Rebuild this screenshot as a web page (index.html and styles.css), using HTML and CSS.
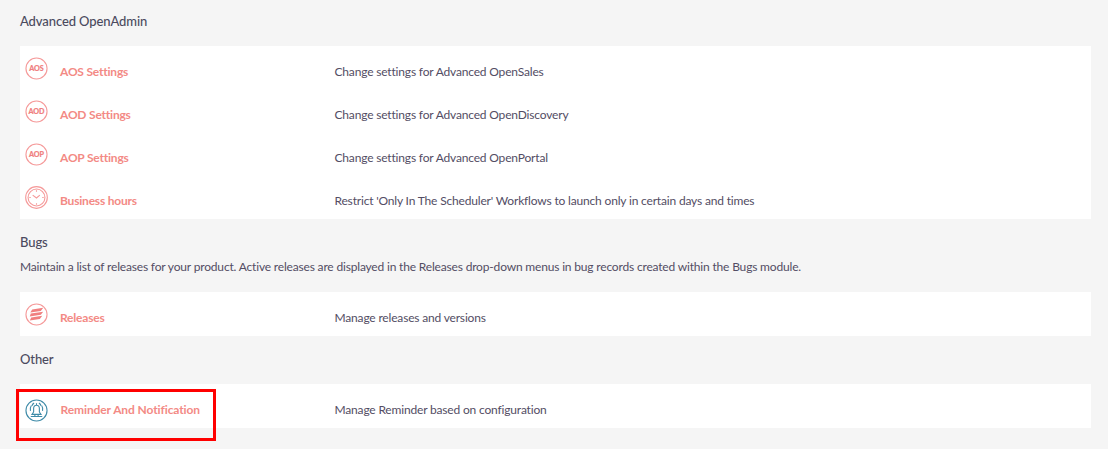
FILE: index.html
```html
<!DOCTYPE html>
<html lang="en">
<head>
  <meta charset="UTF-8" />
  <title>Admin</title>
  <link rel="stylesheet" href="styles.css">
</head>
<body>
  <div class="page">
    <h3 class="section-title first">Advanced OpenAdmin</h3>
    <div class="panel">
      <div class="row">
        <svg class="icon" viewBox="0 0 24 24"><circle cx="12" cy="12" r="11" /><text x="12" y="14.800" class="icon-text">AOS</text></svg>
        <a href="#" class="name">AOS Settings</a>
        <span class="desc">Change settings for Advanced OpenSales</span>
      </div>
      <div class="row">
        <svg class="icon" viewBox="0 0 24 24"><circle cx="12" cy="12" r="11" /><text x="12" y="14.800" class="icon-text">AOD</text></svg>
        <a href="#" class="name">AOD Settings</a>
        <span class="desc">Change settings for Advanced OpenDiscovery</span>
      </div>
      <div class="row">
        <svg class="icon" viewBox="0 0 24 24"><circle cx="12" cy="12" r="11" /><text x="12" y="14.800" class="icon-text">AOP</text></svg>
        <a href="#" class="name">AOP Settings</a>
        <span class="desc">Change settings for Advanced OpenPortal</span>
      </div>
      <div class="row">
        <svg class="icon" viewBox="0 0 24 24">
          <circle cx="12" cy="12" r="11.300" />
          <circle cx="12" cy="12" r="8.800" />
          <path d="M12 4.500v1.500M12 18v1.500M4.500 12h1.500M18 12h1.500M8 9.500l4 3 3.500-3" />
        </svg>
        <a href="#" class="name">Business hours</a>
        <span class="desc">Restrict 'Only In The Scheduler' Workflows to launch only in certain days and times</span>
      </div>
    </div>

    <h3 class="section-title">Bugs</h3>
    <p class="section-note">Maintain a list of releases for your product. Active releases are displayed in the Releases drop-down menus in bug records created within the Bugs module.</p>
    <div class="panel">
      <div class="row">
        <svg class="icon" viewBox="0 0 24 24">
          <circle cx="12" cy="12" r="11" />
          <path class="solid" d="M7.500 6.800L19 5l-2.500 3.300L5.500 9.800zM6 11L19 9l-2.500 3.300L5 14zM6.500 15.200L18 13.400l-2.500 3.300L5 18.300z" />
        </svg>
        <a href="#" class="name">Releases</a>
        <span class="desc">Manage releases and versions</span>
      </div>
    </div>

    <h3 class="section-title">Other</h3>
    <div class="panel">
      <div class="row">
        <svg class="icon blue" viewBox="0 0 24 24">
          <circle cx="12" cy="12" r="11" />
          <path d="M12 6.500c-2 0-3 1.500-3 3.500v3.500L7.300 16h9.400L15 13.500V10c0-2-1-3.500-3-3.500zM6 18.200h12M10.300 16v2.200M13.700 16v2.200M12 4.500v2M6.500 7C5.500 8.500 5.200 10.300 5.700 12.500M17.500 7c1 1.500 1.300 3.300.8 5.500M9.500 4.300C8.300 4.800 7.500 5.800 7.200 7.300M14.500 4.300c1.200.5 2 1.500 2.300 3" />
        </svg>
        <a href="#" class="name shifted">Reminder And Notification</a>
        <span class="desc">Manage Reminder based on configuration</span>
      </div>
    </div>
  </div>
  <div class="highlight"></div>
</body>
</html>
```

FILE: styles.css
```css
html, body {
  margin: 0;
  padding: 0;
  height: 100%;
  overflow: hidden;
  background: #f5f5f5;
  font-family: "Lato", sans-serif;
  color: #534d64;
}

.page {
  padding: 0 17px 0 20px;
}

.section-title {
  margin: 14px 0 16px;
  font-size: 13px;
  line-height: 18px;
  font-weight: 500;
  letter-spacing: -0.1px;
  color: #4b4a5e;
}

.section-title.first {
  margin-top: 0;
  padding-top: 12px;
}

.section-note {
  margin: -9px 0 17px;
  font-size: 12px;
  line-height: 17px;
  letter-spacing: -0.175px;
}

.panel {
  background: #fff;
  padding-bottom: 1px;
}

.row {
  display: flex;
  align-items: flex-start;
  height: 43px;
  box-sizing: border-box;
  padding: 11px 0 0 5px;
}

.icon {
  width: 23px;
  height: 23px;
  flex: none;
  fill: none;
  stroke: #f59a9a;
  stroke-width: 1.150;
}

.icon.blue {
  margin-top: 4px;
  stroke: #3f8ba8;
}

.icon .solid {
  fill: #f08080;
  stroke: none;
}

.icon-text {
  font-size: 7.500px;
  font-weight: 900;
  text-anchor: middle;
  fill: #f08080;
  stroke: #f08080;
  stroke-width: 0.150;
}

.name {
  width: 274.500px;
  margin-left: 12px;
  padding-top: 6.500px;
  font-size: 12px;
  line-height: 16px;
  font-weight: 700;
  letter-spacing: -0.2px;
  color: #f38a85;
  text-decoration: none;
}

.name.shifted {
  margin-left: 12.500px;
  width: 274px;
  letter-spacing: -0.1px;
}

.desc {
  padding-top: 6.500px;
  font-size: 12px;
  line-height: 16px;
  letter-spacing: -0.175px;
}

.highlight {
  position: absolute;
  left: 16px;
  top: 389px;
  width: 194px;
  height: 46px;
  border: 3px solid #f00;
}
```
